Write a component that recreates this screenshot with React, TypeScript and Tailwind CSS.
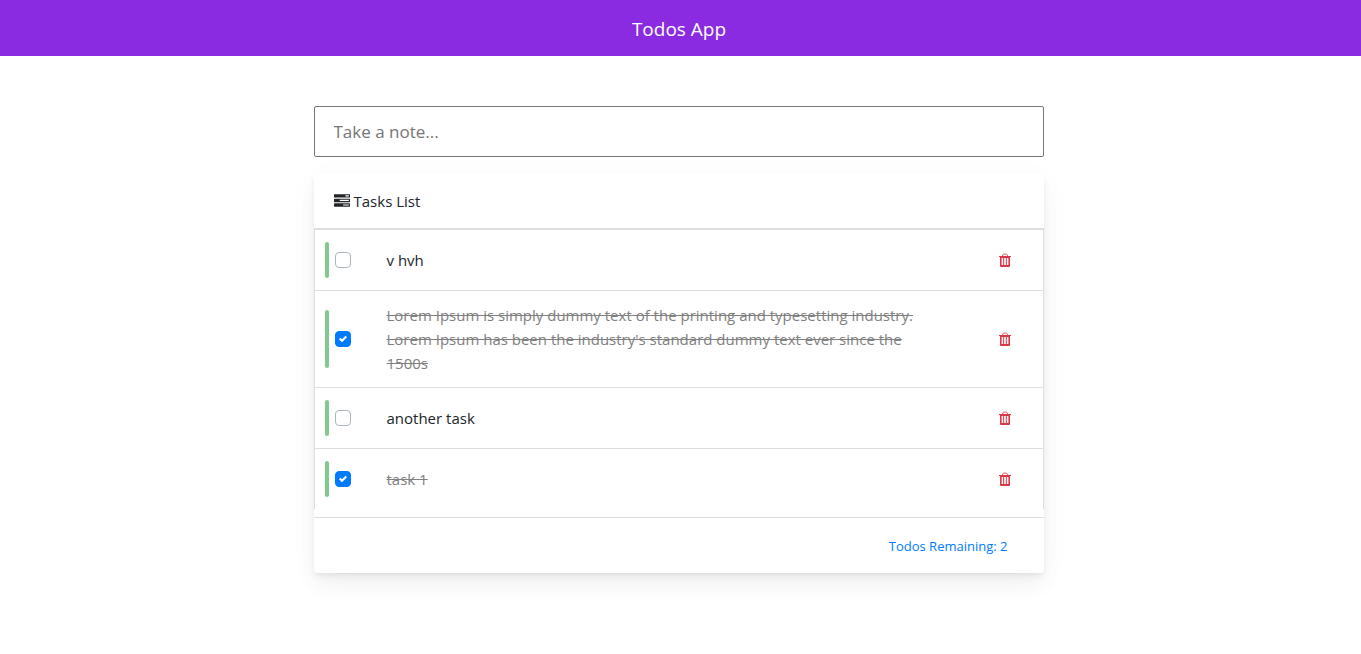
import { useState } from "react";

type Todo = { id: number; text: string; done: boolean };

const initialTodos: Todo[] = [
  { id: 1, text: "v hvh", done: false },
  {
    id: 2,
    text: "Lorem Ipsum is simply dummy text of the printing and typesetting industry. Lorem Ipsum has been the industry's standard dummy text ever since the 1500s",
    done: true,
  },
  { id: 3, text: "another task", done: false },
  { id: 4, text: "task 1", done: true },
];

function TasksIcon() {
  return (
    <svg viewBox="0 0 1792 1792" className="size-4 shrink-0" fill="currentColor" aria-hidden="true">
      <path d="M1024 1408h640v-128h-640v128zm-384-512h1024v-128h-1024v128zm640-512h384v-128h-384v128zm512 832v256q0 26-19 45t-45 19h-1664q-26 0-45-19t-19-45v-256q0-26 19-45t45-19h1664q26 0 45 19t19 45zm0-512v256q0 26-19 45t-45 19h-1664q-26 0-45-19t-19-45v-256q0-26 19-45t45-19h1664q26 0 45 19t19 45zm0-512v256q0 26-19 45t-45 19h-1664q-26 0-45-19t-19-45v-256q0-26 19-45t45-19h1664q26 0 45 19t19 45z" />
    </svg>
  );
}

function TrashIcon() {
  return (
    <svg viewBox="0 0 16 16" className="size-4" aria-hidden="true">
      <path d="M5.4 4.2l.5-1.4q.3-.7 1-.7h2.2q.7 0 1 .7l.5 1.4" fill="none" stroke="currentColor" strokeWidth="1" opacity="0.8" />
      <path
        d="M2 4h12v1h-1v9q0 1-1 1H4q-1 0-1-1V5H2zM4.6 6v7h1.6V6zM7.2 6v7h1.6V6zM9.8 6v7h1.6V6z"
        fill="currentColor"
        fillRule="evenodd"
      />
    </svg>
  );
}

type TodoRowProps = { todo: Todo; onToggle: () => void; onDelete: () => void };

function TodoRow({ todo, onToggle, onDelete }: TodoRowProps) {
  const id = `todo-${todo.id}`;
  return (
    <li className="relative flex items-center py-3 pr-[30px] pl-5">
      <span className="absolute inset-y-[20%] left-2.5 w-1 rounded-sm bg-[#7fcb8f]" />
      <span className="grid size-4 shrink-0">
        <input
          id={id}
          type="checkbox"
          checked={todo.done}
          onChange={onToggle}
          className="peer col-start-1 row-start-1 size-4 appearance-none rounded border border-[#adb5bd] bg-white checked:border-[#007bff] checked:bg-[#007bff]"
        />
        <svg
          viewBox="0 0 8 8"
          className="pointer-events-none invisible z-10 col-start-1 row-start-1 size-2 place-self-center peer-checked:visible"
          fill="#fff"
          aria-hidden="true"
        >
          <path d="M6.564.75l-3.59 3.612-1.538-1.55L0 4.26 2.974 7.25 8 2.193z" />
        </svg>
      </span>
      <div className="flex min-h-9 grow items-center pl-9">
        <label
          htmlFor={id}
          className={todo.done ? "max-w-[546px] text-[#808080] line-through" : "max-w-[546px]"}
        >
          {todo.text}
        </label>
      </div>
      <button type="button" aria-label="Delete task" onClick={onDelete} className="shrink-0 text-[#dc3545]">
        <TrashIcon />
      </button>
    </li>
  );
}

export default function App() {
  const [todos, setTodos] = useState<Todo[]>(initialTodos);
  const [note, setNote] = useState("");
  const remaining = todos.filter((t) => !t.done).length;

  const addTodo = (event: { preventDefault: () => void }) => {
    event.preventDefault();
    if (!note.trim()) return;
    setTodos([{ id: Date.now(), text: note.trim(), done: false }, ...todos]);
    setNote("");
  };

  return (
    <div className="font-['Open_Sans',sans-serif] text-[15px] leading-6 text-[#212529]">
      <header className="flex h-14 items-center justify-center bg-[#8a2be2] pt-0.5 pr-[3px]">
        <h1 className="text-[19px] text-white">Todos App</h1>
      </header>
      <main className="pt-[50px] pr-1 pb-12">
        <div className="mx-auto max-w-[730px]">
          <form onSubmit={addTodo}>
            <input
              type="text"
              aria-label="Take a note"
              placeholder="Take a note..."
              value={note}
              onChange={(e) => setNote(e.target.value)}
              className="block h-[51px] w-full rounded-xs border border-[#767676] px-[19px] text-[17px] placeholder:text-[#757575]"
            />
          </form>
          <section className="mt-4 rounded bg-white shadow-[0_7px_35px_rgba(4,9,20,0.03),0_15px_22px_rgba(4,9,20,0.03),0_4px_8px_rgba(4,9,20,0.05),0_2px_3px_rgba(4,9,20,0.03)]">
            <h2 className="flex h-14 items-center gap-1 border-b border-[#dedede] px-5">
              <TasksIcon />
              Tasks List
            </h2>
            <ul className="divide-y divide-[#dedede] border-x border-t border-[#dedede]">
              {todos.map((todo) => (
                <TodoRow
                  key={todo.id}
                  todo={todo}
                  onToggle={() => setTodos(todos.map((t) => (t.id === todo.id ? { ...t, done: !t.done } : t)))}
                  onDelete={() => setTodos(todos.filter((t) => t.id !== todo.id))}
                />
              ))}
            </ul>
            <footer className="mt-2 flex h-14 items-center justify-end border-t border-[#dedede] pr-9 text-[13px] text-[#007bff]">
              Todos Remaining: {remaining}
            </footer>
          </section>
        </div>
      </main>
    </div>
  );
}
